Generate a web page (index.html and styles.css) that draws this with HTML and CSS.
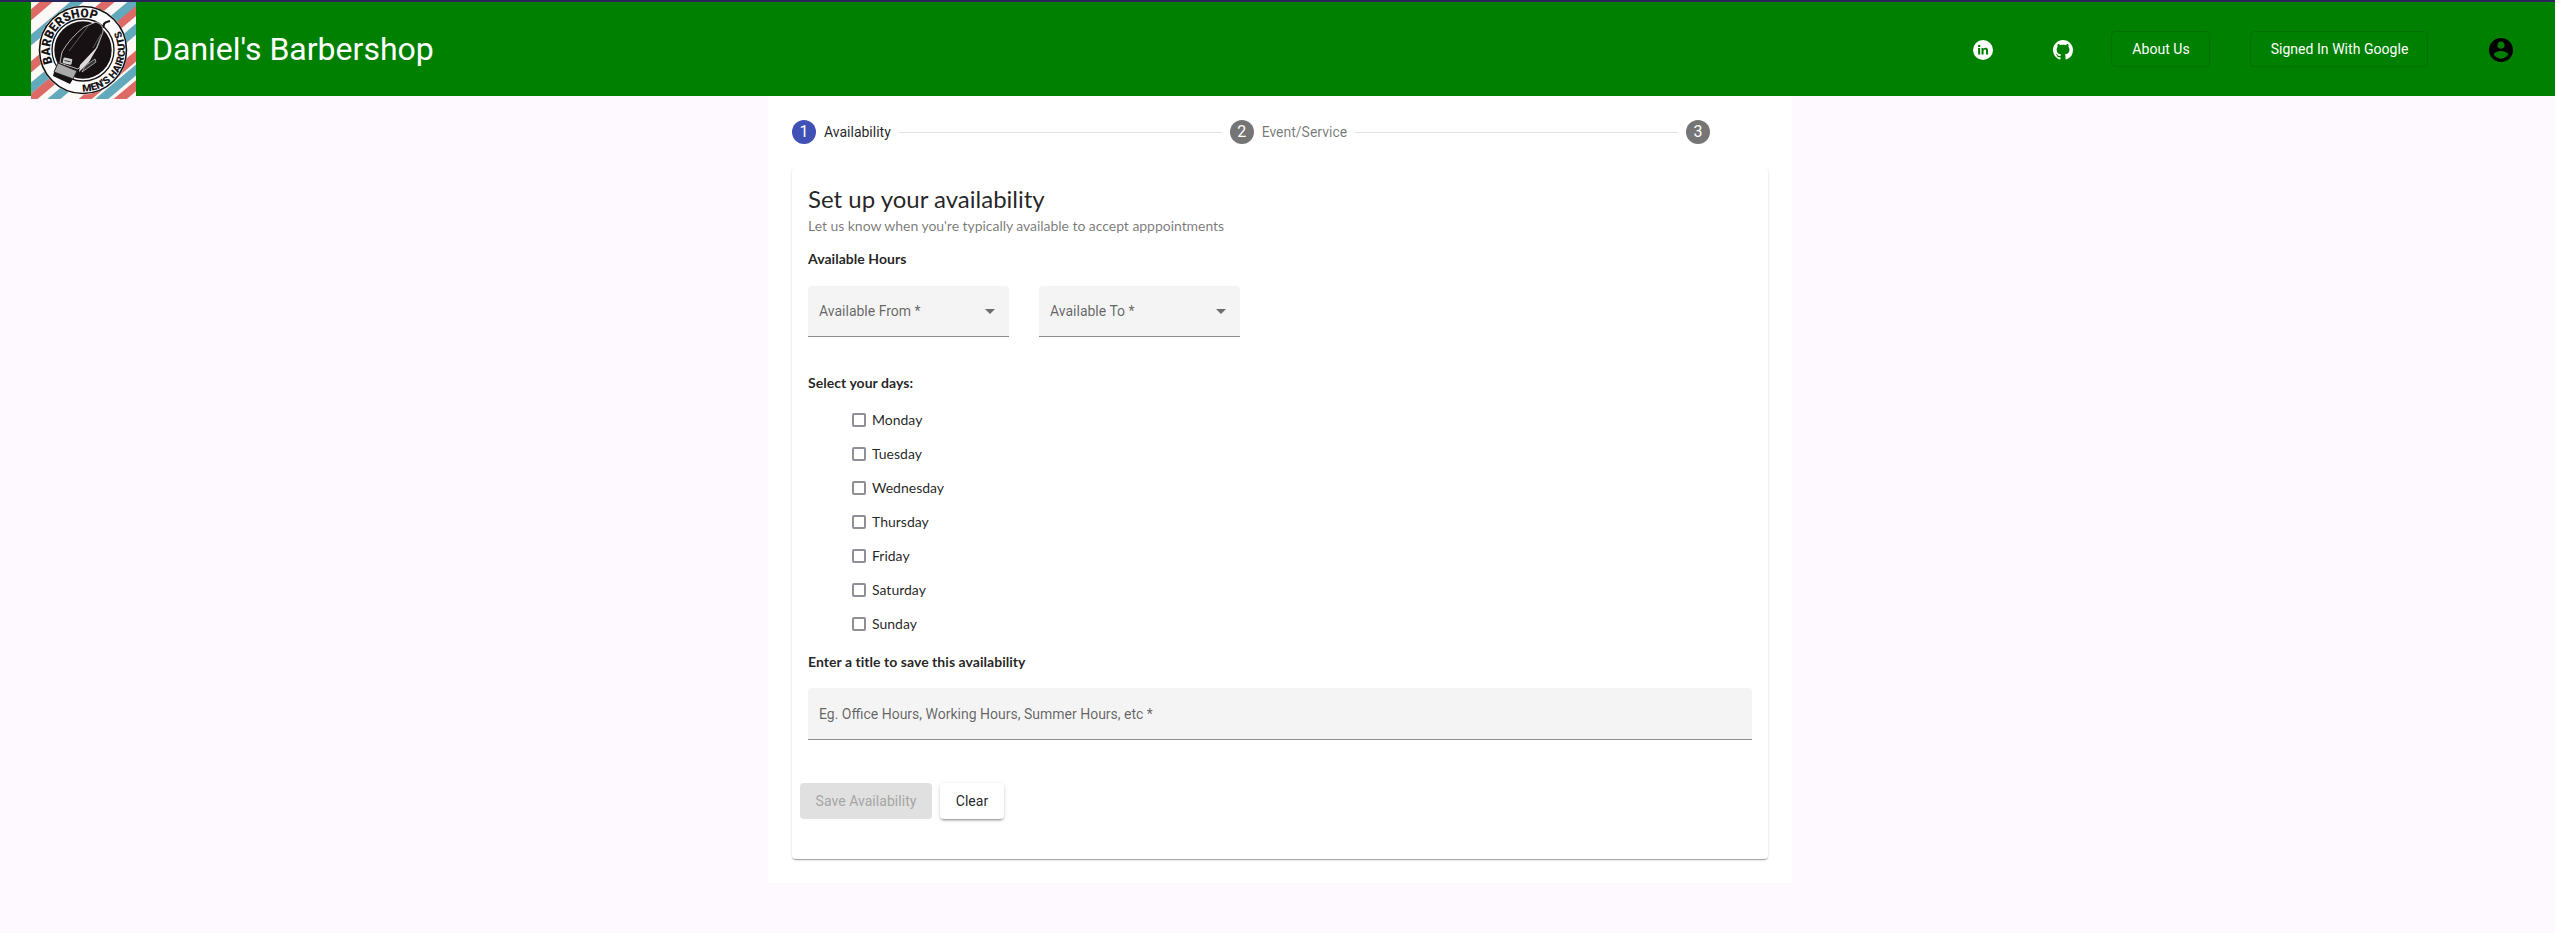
FILE: index.html
```html
<!DOCTYPE html>
<html lang="en">
<head>
<meta charset="utf-8">
<title>Daniel's Barbershop</title>
<link rel="stylesheet" href="styles.css">
</head>
<body>
<header class="toolbar">
  <svg class="logo" viewBox="0 0 105 97">
    <defs>
      <path id="arcTop" d="M21.600 60.900A33 33 0 1 1 84.500 42"/>
      <path id="arcBottom" d="M51.500 89.500A41.500 41.500 0 0 0 80 17"/>
    </defs>
    <rect width="105" height="97" fill="#fcf8f6"/>
    <g stroke-width="8.5">
      <path stroke="#dd6a64" d="M-6 18L22 -6M-6 70L84 -6M-6 102L115 0M33 115L118 43M76 108L118 73"/>
      <path stroke="#62a9bb" d="M-6 43L53 -6M-6 91L109 -5M10 108L118 16M53 112L118 57"/>
    </g>
    <circle cx="52" cy="48" r="44.500" fill="#fff"/>
    <circle cx="52" cy="48" r="43.500" fill="#fdfdfd" stroke="#171315" stroke-width="1.600"/>
    <circle cx="52" cy="48" r="31" fill="none" stroke="#171315" stroke-width="1.300"/>
    <circle cx="52" cy="48" r="28.700" fill="#171113"/>
    <text class="logo-top"><textPath href="#arcTop" textLength="78" lengthAdjust="spacingAndGlyphs">BARBERSHOP</textPath></text>
    <text class="logo-bottom"><textPath href="#arcBottom" textLength="86" lengthAdjust="spacingAndGlyphs">MEN'S HAIRCUTS</textPath></text>
    <path d="M69 26Q73 26 73 22Q74 20 79 19" fill="none" stroke="#171315" stroke-width="2.200"/>
    <path d="M31 50Q39 36 53 25L65 20Q73 23 72 30L66 46L47 67L29 61Z" fill="#171113" stroke="#ddd" stroke-width=".8"/>
    <path d="M71 30L65 46L49 63L48 70L58 60L65 48Z" fill="#ddd"/>
    <path d="M58 23L38 49M70 32L62 46" fill="none" stroke="#777" stroke-width=".7"/>
    <path d="M54 64L64 57L65 60L51 70Z" fill="#333" stroke="#eee" stroke-width=".6"/>
    <rect x="32" y="56" width="9" height="6" rx="1" transform="rotate(12 36 59)" fill="#cfcfcf"/>
    <path d="M33.500 58.500L39.500 59.800" stroke="#333" stroke-width="1"/>
    <path d="M27 61L46 69L42 77L23 70Z" fill="#aaa" stroke="#2b2728" stroke-width="1"/>
    <path d="M23 70L42 77L39 82L22 74Z" fill="#171315"/>
  </svg>
  <h1 class="brand">Daniel's Barbershop</h1>
  <nav class="actions">
    <svg class="linkedin" viewBox="0 0 20 20"><circle cx="10" cy="10" r="10" fill="#fff"/><path fill="green" d="M5.100 8h2.100v6.400H5.100zM8.500 8h2v.9c.4-.7 1.100-1.100 2.100-1.100 2 0 2.500 1.300 2.500 3.100v3.500H13v-3.100c0-.8-.1-1.700-1.100-1.700s-1.300.8-1.300 1.700v3.100H8.500z"/><circle cx="6.150" cy="5.900" r="1.200" fill="green"/></svg>
    <svg class="github" viewBox="0 0 16 16"><path fill="#fff" d="M8 0C3.580 0 0 3.580 0 8c0 3.540 2.290 6.530 5.470 7.590.4.070.55-.17.55-.38 0-.19-.01-.82-.01-1.490-2.010.37-2.530-.49-2.690-.94-.09-.23-.48-.94-.82-1.130-.28-.15-.68-.52-.01-.53.63-.01 1.080.58 1.230.82.72 1.210 1.870.87 2.330.66.070-.52.280-.87.510-1.070-1.780-.2-3.640-.89-3.640-3.950 0-.87.310-1.590.82-2.150-.08-.2-.36-1.020.08-2.120 0 0 .67-.21 2.200.82.640-.18 1.320-.27 2-.27s1.360.09 2 .27c1.530-1.040 2.200-.82 2.200-.82.440 1.100.16 1.920.08 2.120.51.560.82 1.270.82 2.150 0 3.070-1.870 3.750-3.650 3.950.29.250.54.730.54 1.480 0 1.070-.01 1.930-.01 2.200 0 .21.150.46.550.38A8.010 8.010 0 0 0 16 8c0-4.420-3.580-8-8-8z"/></svg>
    <button class="nav-button about">About Us</button>
    <button class="nav-button signed">Signed In With Google</button>
    <svg class="account" viewBox="2 2 20 20"><path d="M12 2C6.480 2 2 6.480 2 12s4.480 10 10 10 10-4.480 10-10S17.520 2 12 2zm0 3c1.660 0 3 1.340 3 3s-1.340 3-3 3-3-1.340-3-3 1.340-3 3-3zm0 14.200c-2.500 0-4.710-1.280-6-3.220.030-1.990 4-3.080 6-3.080 1.990 0 5.970 1.090 6 3.080-1.290 1.940-3.500 3.220-6 3.220z"/></svg>
  </nav>
</header>
<main class="stepper">
  <div class="steps">
    <div class="step active"><span class="num">1</span><span class="step-label">Availability</span></div>
    <i class="line"></i>
    <div class="step"><span class="num">2</span><span class="step-label">Event/Service</span></div>
    <i class="line"></i>
    <div class="step"><span class="num">3</span><span class="step-label"></span></div>
  </div>
  <div class="content">
    <section class="card">
      <h2 class="title">Set up your availability</h2>
      <p class="subtitle">Let us know when you're typically available to accept apppointments</p>
      <h3 class="heading hours">Available Hours</h3>
      <div class="selects">
        <div class="field select">Available From *<i class="arrow"></i></div>
        <div class="field select">Available To *<i class="arrow"></i></div>
      </div>
      <h3 class="heading days-heading">Select your days:</h3>
      <ul class="days">
        <li class="day"><i class="box"></i>Monday</li>
        <li class="day"><i class="box"></i>Tuesday</li>
        <li class="day"><i class="box"></i>Wednesday</li>
        <li class="day"><i class="box"></i>Thursday</li>
        <li class="day"><i class="box"></i>Friday</li>
        <li class="day"><i class="box"></i>Saturday</li>
        <li class="day"><i class="box"></i>Sunday</li>
      </ul>
      <h3 class="heading title-heading">Enter a title to save this availability</h3>
      <div class="field input">Eg. Office Hours, Working Hours, Summer Hours, etc *</div>
      <div class="buttons">
        <button class="button save" disabled>Save Availability</button>
        <button class="button clear">Clear</button>
      </div>
    </section>
  </div>
</main>
</body>
</html>
```
FILE: styles.css
```css
* { box-sizing: border-box; }
body { margin: 0; min-height: 933px; background: #fef8ff; font: 14px/20px Roboto, sans-serif; color: rgba(0,0,0,.87); }
h1, h2, h3, p, ul { margin: 0; padding: 0; }
button { font-family: inherit; }

.toolbar { height: 96px; padding: 0 42px 0 31px; display: flex; align-items: flex-start; background: green; border-top: 2px solid #2a2558; }
.logo { width: 105px; height: 97px; flex: none; }
.logo-top { font: 900 12.500px Roboto, sans-serif; fill: #171315; }
.logo-bottom { font: 900 10px Roboto, sans-serif; fill: #171315; }
.brand { margin-left: 16px; font-size: 32px; line-height: 94px; font-weight: 400; color: #fff; white-space: nowrap; }
.actions { margin-left: auto; height: 94px; display: flex; align-items: center; }
.linkedin { width: 20px; height: 20px; margin-right: 60px; margin-top: 2px; }
.github { width: 20px; height: 20px; margin-right: 38px; margin-top: 2px; }
.nav-button { height: 36px; border: 1px solid rgba(0,0,0,.12); border-radius: 4px; background: none; color: #fff; font-size: 14px; font-weight: 400; letter-spacing: .04px; padding: 0 0 0 1px; }
.about { width: 99px; margin-right: 40px; }
.signed { width: 178px; margin-right: 61px; }
.account { width: 24px; height: 24px; margin-top: 2px; }

.stepper { width: 1024px; height: 787px; margin: 0 auto 0 768px; background: #fff; }
.steps { height: 72px; padding: 0 24px; display: flex; align-items: center; }
.step { display: flex; align-items: center; color: rgba(0,0,0,.54); }
.num { width: 24px; height: 24px; margin-right: 8px; border-radius: 50%; background: #757575; color: #fff; font-size: 16px; line-height: 24px; text-align: center; }
.step-label { min-width: 50px; }
.active { color: rgba(0,0,0,.87); }
.active .num { background: #3f51b5; }
.line { flex: 1; height: 1px; margin: 1px 8px 0; background: #e0e0e0; }

.content { padding: 0 24px 24px; overflow: hidden; height: 715px; }
.card { height: 691px; padding: 15px 16px 16px; border-radius: 4px; background: #fff; font-family: Lato, sans-serif; box-shadow: 0 2px 1px -1px rgba(0,0,0,.2), 0 1px 1px rgba(0,0,0,.14), 0 1px 3px rgba(0,0,0,.12); }
.title { font-size: 24px; line-height: 32px; font-weight: 400; }
.subtitle { line-height: 22px; letter-spacing: -.04px; color: rgba(0,0,0,.54); }
.heading { font-size: 14px; line-height: 20px; font-weight: 700; letter-spacing: .04px; }
.hours { margin-top: 12px; }
.selects { display: flex; gap: 30px; margin-top: 17px; }
.field { height: 52px; padding: 0 11px; display: flex; align-items: center; background: #f4f4f4; border-bottom: 1px solid #8c8c8c; border-radius: 4px 4px 0 0; font-family: Roboto, sans-serif; color: rgba(0,0,0,.6); }
.select { width: 201px; height: 51px; justify-content: space-between; }
.arrow { border: 5px solid transparent; border-top-color: #6d6d6d; border-bottom: 0; margin-right: 3px; }
.days-heading { margin-top: 36px; }
.days { margin: 10px 0 0 44px; list-style: none; }
.day { height: 34px; display: flex; align-items: center; }
.box { width: 14px; height: 14px; margin-right: 6px; border: 2px solid #8f8f97; border-radius: 2px; }
.title-heading { margin-top: 11px; }
.input { margin-top: 16px; }
.buttons { display: flex; gap: 8px; margin: 43px 0 0 -8px; }
.button { height: 36px; padding: 0; border: 0; border-radius: 4px; font: 400 14px Roboto, sans-serif; letter-spacing: .04px; }
.save { width: 132px; background: #e0e0e0; color: #a6a6a6; }
.clear { width: 64px; background: #fff; color: rgba(0,0,0,.87); box-shadow: 0 3px 1px -2px rgba(0,0,0,.2), 0 2px 2px rgba(0,0,0,.14), 0 1px 5px rgba(0,0,0,.12); }
```
